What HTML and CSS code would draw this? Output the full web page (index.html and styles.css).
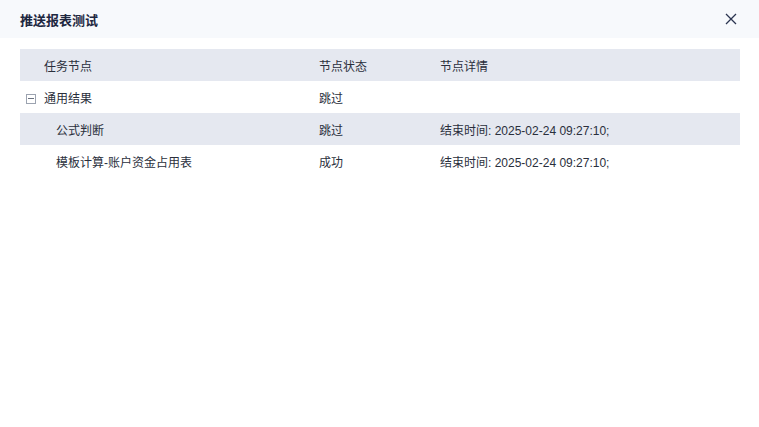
FILE: index.html
```html
<!DOCTYPE html>
<html>
<head>
    <title>推送报表测试</title>
    <meta charset="UTF-8">
    <meta name="viewport" content="width=device-width, initial-scale=1.0">
    <link rel="stylesheet" href="styles.css">
</head>
<body>
<div class="dialog">
    <header class="dialog-header">
        <h1 class="dialog-title">推送报表测试</h1>
        <button class="close-btn" aria-label="关闭">
            <svg width="12" height="12" viewBox="0 0 12 12">
                <path d="M1 1L11 11M11 1L1 11" stroke="#2b3550" stroke-width="1.3" fill="none"/>
            </svg>
        </button>
    </header>
    <main class="dialog-body">
        <table class="node-table">
            <thead>
                <tr>
                    <th class="col-name"><span class="indent-head">任务节点</span></th>
                    <th class="col-status">节点状态</th>
                    <th class="col-detail">节点详情</th>
                </tr>
            </thead>
            <tbody>
                <tr>
                    <td class="col-name"><span class="toggle"></span>通用结果</td>
                    <td class="col-status">跳过</td>
                    <td class="col-detail"></td>
                </tr>
                <tr class="shaded">
                    <td class="col-name"><span class="child">公式判断</span></td>
                    <td class="col-status">跳过</td>
                    <td class="col-detail">结束时间: 2025-02-24 09:27:10;</td>
                </tr>
                <tr>
                    <td class="col-name"><span class="child">模板计算-账户资金占用表</span></td>
                    <td class="col-status">成功</td>
                    <td class="col-detail">结束时间: 2025-02-24 09:27:10;</td>
                </tr>
            </tbody>
        </table>
    </main>
</div>
</body>
</html>
```

FILE: styles.css
```css
body {
    margin: 0;
    background-color: #fff;
    color: #2a2f3c;
    font-family: "Liberation Sans", "Noto Sans CJK SC", sans-serif;
}

.dialog-header {
    height: 38px;
    background-color: #f7f9fc;
    display: flex;
    align-items: center;
    justify-content: space-between;
    padding: 0 20px;
}

.dialog-title {
    margin: 0;
    font-size: 13px;
    font-weight: bold;
    color: #1d2740;
}

.close-btn {
    border: none;
    background: none;
    padding: 0;
    margin-right: 2px;
    width: 12px;
    height: 12px;
    display: flex;
}

.dialog-body {
    padding: 11px 19px 0 20px;
}

.node-table {
    width: 100%;
    border-collapse: collapse;
    font-size: 12px;
}

.node-table th,
.node-table td {
    height: 32px;
    padding: 0;
    text-align: left;
    font-weight: normal;
    white-space: nowrap;
}

.node-table thead tr,
.node-table tr.shaded {
    background-color: #e5e8f0;
}

.col-name {
    width: 299px;
}

.col-status {
    width: 121px;
}

.indent-head {
    padding-left: 24px;
}

.toggle {
    display: inline-block;
    box-sizing: border-box;
    width: 10px;
    height: 10px;
    border: 1px solid #9ca3b0;
    margin: 0 8px 0 6px;
    vertical-align: -1px;
    position: relative;
}

.toggle::after {
    content: "";
    position: absolute;
    left: 1px;
    right: 1px;
    top: 3px;
    height: 1px;
    background-color: #6b7280;
}

.child {
    padding-left: 36px;
}
```
